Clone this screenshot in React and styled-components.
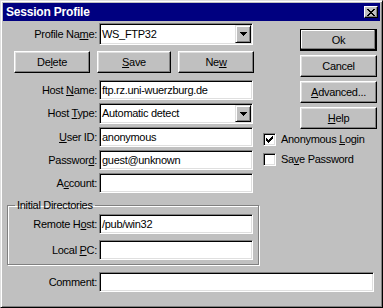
import React from "react";
import styled, { createGlobalStyle } from "styled-components";

const GlobalStyle = createGlobalStyle`
  html, body {
    margin: 0;
    padding: 0;
    background: #c0c0c0;
  }
  body {
    font-family: "Liberation Sans", Arial, sans-serif;
    font-size: 11px;
    line-height: 13px;
    color: #000;
  }
`;

const Window = styled.div`
  box-sizing: border-box;
  width: 383px;
  height: 308px;
  display: flex;
  flex-direction: column;
  padding: 2px;
  background: #c0c0c0;
  border: 1px solid;
  border-color: #dfdfdf #000 #000 #dfdfdf;
  box-shadow: inset 1px 1px 0 #fff, inset -1px -1px 0 #808080;
`;

const TitleBar = styled.div`
  height: 18px;
  display: flex;
  align-items: center;
  justify-content: space-between;
  padding: 0 2px 0 3px;
  background: #000080;
  color: #fff;
`;

const Title = styled.span`
  font-weight: bold;
  font-size: 12px;
  letter-spacing: -0.2px;
`;

const CloseButton = styled.div`
  box-sizing: border-box;
  width: 14px;
  height: 12px;
  display: flex;
  align-items: center;
  justify-content: center;
  background: #c0c0c0;
  border: 1px solid;
  border-color: #fff #000 #000 #fff;
  box-shadow: inset -1px -1px 0 #808080;
`;

const Body = styled.div`
  flex: 1;
  display: grid;
  grid-template-columns: 256px 1fr;
  grid-template-rows: auto auto;
  align-content: start;
  row-gap: 7px;
  padding: 2px 3px 0 4px;
  letter-spacing: -0.3px;
`;

const LeftCol = styled.div`
  display: flex;
  flex-direction: column;
`;

const RightCol = styled.div`
  display: flex;
  flex-direction: column;
  align-items: flex-end;
  padding-top: 6px;
`;

const Row = styled.div`
  display: grid;
  grid-template-columns: ${(p) => p.$label || 90}px auto;
  column-gap: 2px;
  align-items: center;
  margin-top: ${(p) => p.$top || 0}px;
`;

const Label = styled.span`
  text-align: right;
  white-space: nowrap;
`;

const Key = styled.u`
  text-decoration: underline;
  text-underline-offset: 1px;
`;

const Field = styled.div`
  box-sizing: border-box;
  width: ${(p) => p.$w || 154}px;
  height: 20px;
  display: flex;
  align-items: center;
  padding: 0 2px;
  background: #fff;
  border: 1px solid;
  border-color: #808080 #fff #fff #808080;
  box-shadow: inset 1px 1px 0 #000, inset -1px -1px 0 #dfdfdf;
  white-space: nowrap;
  overflow: hidden;
`;

const Combo = styled(Field)`
  height: ${(p) => p.$h || 22}px;
  align-items: stretch;
  padding: 1px 1px 1px 2px;
  & > span {
    flex: 1;
    display: flex;
    align-items: center;
  }
`;

const DropButton = styled.div`
  box-sizing: border-box;
  width: 16px;
  display: flex;
  align-items: center;
  justify-content: center;
  background: #c0c0c0;
  border: 1px solid;
  border-color: #dfdfdf #000 #000 #dfdfdf;
  box-shadow: inset 1px 1px 0 #fff, inset -1px -1px 0 #808080;
`;

const ButtonRow = styled.div`
  display: flex;
  gap: 7px;
  margin: 6px 0 0 7px;
`;

const Button = styled.div`
  box-sizing: border-box;
  width: ${(p) => p.$w || 77}px;
  height: 22px;
  display: flex;
  align-items: center;
  justify-content: center;
  margin-top: ${(p) => p.$top || 0}px;
  background: #c0c0c0;
  border: 1px solid;
  border-color: ${(p) => (p.$default ? "#000" : "#fff #000 #000 #fff")};
  box-shadow: ${(p) =>
    p.$default
      ? "inset -1px -1px 0 #000, inset -2px -2px 0 #808080, inset 1px 1px 0 #fff"
      : "inset -1px -1px 0 #808080, inset 1px 1px 0 #dfdfdf"};
`;

const Group = styled.fieldset`
  box-sizing: border-box;
  width: 252px;
  margin: 6px 0 0 0;
  padding: 0 0 4px 0;
  border: 1px solid #808080;
  box-shadow: 1px 1px 0 #fff, inset 1px 1px 0 #fff;
`;

const Legend = styled.legend`
  margin-left: 7px;
  padding: 0 2px;
  line-height: 12px;
`;

const CheckRow = styled.div`
  align-self: flex-start;
  display: flex;
  align-items: center;
  gap: 5px;
  margin-top: ${(p) => p.$top || 0}px;
`;

const CheckBox = styled.div`
  box-sizing: border-box;
  width: 13px;
  height: 13px;
  display: flex;
  align-items: center;
  justify-content: center;
  background: #fff;
  border: 1px solid;
  border-color: #808080 #fff #fff #808080;
  box-shadow: inset 1px 1px 0 #000, inset -1px -1px 0 #dfdfdf;
`;

const CommentRow = styled(Row)`
  grid-column: 1 / span 2;
`;

const CloseGlyph = () => (
  <svg width="8" height="7" viewBox="0 0 8 7">
    <path
      fill="#000"
      d="M0 0h2v1H0z M6 0h2v1H6z M1 1h2v1H1z M5 1h2v1H5z M2 2h4v1H2z M3 3h2v1H3z M2 4h4v1H2z M1 5h2v1H1z M5 5h2v1H5z M0 6h2v1H0z M6 6h2v1H6z"
    />
  </svg>
);

const Arrow = () => (
  <svg width="7" height="4" viewBox="0 0 7 4">
    <path fill="#000" d="M0 0h7v1H0z M1 1h5v1H1z M2 2h3v1H2z M3 3h1v1H3z" />
  </svg>
);

const Check = () => (
  <svg width="7" height="7" viewBox="0 0 7 7">
    <path
      fill="#000"
      d="M0 2h1v3H0z M1 3h1v3H1z M2 4h1v3H2z M3 3h1v3H3z M4 2h1v3H4z M5 1h1v3H5z M6 0h1v3H6z"
    />
  </svg>
);

const ComboBox = ({ value, w, h }) => (
  <Combo $w={w} $h={h}>
    <span>{value}</span>
    <DropButton>
      <Arrow />
    </DropButton>
  </Combo>
);

export default function App() {
  return (
    <>
      <GlobalStyle />
      <Window>
        <TitleBar>
          <Title>Session Profile</Title>
          <CloseButton>
            <CloseGlyph />
          </CloseButton>
        </TitleBar>
        <Body>
          <LeftCol>
            <Row>
              <Label>
                Profile Na<Key>m</Key>e:
              </Label>
              <ComboBox value="WS_FTP32" />
            </Row>
            <ButtonRow>
              <Button $w={76}>
                De<Key>l</Key>ete
              </Button>
              <Button $w={74}>
                <Key>S</Key>ave
              </Button>
              <Button $w={76}>
                Ne<Key>w</Key>
              </Button>
            </ButtonRow>
            <Row $top={7}>
              <Label>
                Host <Key>N</Key>ame:
              </Label>
              <Field>ftp.rz.uni-wuerzburg.de</Field>
            </Row>
            <Row $top={3}>
              <Label>
                Host <Key>T</Key>ype:
              </Label>
              <ComboBox value="Automatic detect" h={21} />
            </Row>
            <Row $top={3}>
              <Label>
                <Key>U</Key>ser ID:
              </Label>
              <Field>anonymous</Field>
            </Row>
            <Row $top={3}>
              <Label>
                Passwor<Key>d</Key>:
              </Label>
              <Field>guest@unknown</Field>
            </Row>
            <Row $top={3}>
              <Label>
                A<Key>c</Key>count:
              </Label>
              <Field />
            </Row>
            <Group>
              <Legend>Initial Directories</Legend>
              <Row $label={89} $top={3}>
                <Label>
                  Remote H<Key>o</Key>st:
                </Label>
                <Field>/pub/win32</Field>
              </Row>
              <Row $label={89} $top={6}>
                <Label>
                  Local <Key>P</Key>C:
                </Label>
                <Field />
              </Row>
            </Group>
          </LeftCol>
          <RightCol>
            <Button $default>Ok</Button>
            <Button $top={4}>Cancel</Button>
            <Button $top={4}>
              <Key>A</Key>dvanced...
            </Button>
            <Button $top={4}>
              <Key>H</Key>elp
            </Button>
            <CheckRow $top={4}>
              <CheckBox>
                <Check />
              </CheckBox>
              <span>
                Anonymous <Key>L</Key>ogin
              </span>
            </CheckRow>
            <CheckRow $top={7}>
              <CheckBox />
              <span>
                Sa<Key>v</Key>e Password
              </span>
            </CheckRow>
          </RightCol>
          <CommentRow>
            <Label>Comment:</Label>
            <Field $w={275} />
          </CommentRow>
        </Body>
      </Window>
    </>
  );
}
